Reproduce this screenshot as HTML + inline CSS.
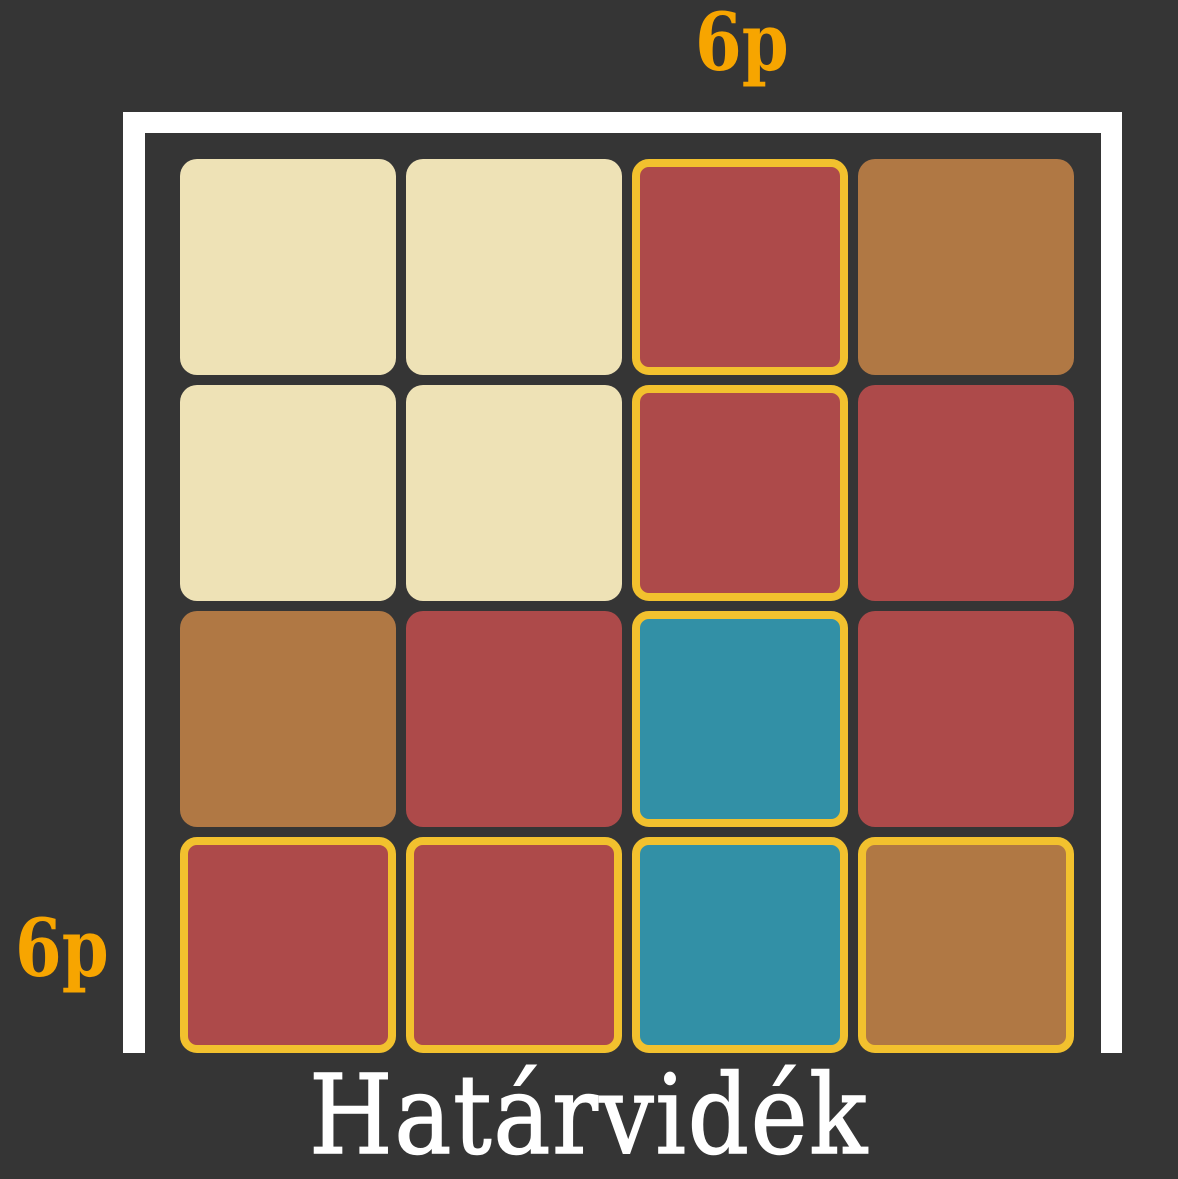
<!DOCTYPE html>
<html><head><meta charset="utf-8"><style>
html,body{margin:0;padding:0}
body{width:1178px;height:1174px;background:#353535;position:relative;overflow:hidden}
.f{position:absolute;background:#fff}
.t{position:absolute;width:216px;height:216px;border-radius:17px;box-sizing:border-box}
.c{background:#eee2b6}.r{background:#ad4a4a}.b{background:#b07844}.g{background:#3290a6}
.y{border:8px solid #f2c12e}
.lab{position:absolute;color:#f7a500;font-family:"DejaVu Serif","Liberation Serif",serif;font-weight:bold;font-size:80px;line-height:1;transform:scaleX(0.84);transform-origin:left top}
.title{position:absolute;left:0;width:1178px;text-align:center;top:1060px;color:#fff;font-family:"DejaVu Serif","Liberation Serif",serif;font-size:110px;line-height:1;transform:scaleX(0.87);letter-spacing:2px;-webkit-text-stroke:1.5px #fff}
</style></head><body>
<div class="f" style="left:123px;top:112px;width:999px;height:21px"></div>
<div class="f" style="left:123px;top:112px;width:22px;height:941px"></div>
<div class="f" style="left:1101px;top:112px;width:21px;height:941px"></div>
<div class="lab" style="left:695px;top:2px">6p</div>
<div class="lab" style="left:15px;top:908px">6p</div>

<div class="t c" style="left:180px;top:159px"></div>
<div class="t c" style="left:406px;top:159px"></div>
<div class="t r y" style="left:632px;top:159px"></div>
<div class="t b" style="left:858px;top:159px"></div>

<div class="t c" style="left:180px;top:385px"></div>
<div class="t c" style="left:406px;top:385px"></div>
<div class="t r y" style="left:632px;top:385px"></div>
<div class="t r" style="left:858px;top:385px"></div>

<div class="t b" style="left:180px;top:611px"></div>
<div class="t r" style="left:406px;top:611px"></div>
<div class="t g y" style="left:632px;top:611px"></div>
<div class="t r" style="left:858px;top:611px"></div>

<div class="t r y" style="left:180px;top:837px"></div>
<div class="t r y" style="left:406px;top:837px"></div>
<div class="t g y" style="left:632px;top:837px"></div>
<div class="t b y" style="left:858px;top:837px"></div>

<div class="title">Határvidék</div>
</body></html>
